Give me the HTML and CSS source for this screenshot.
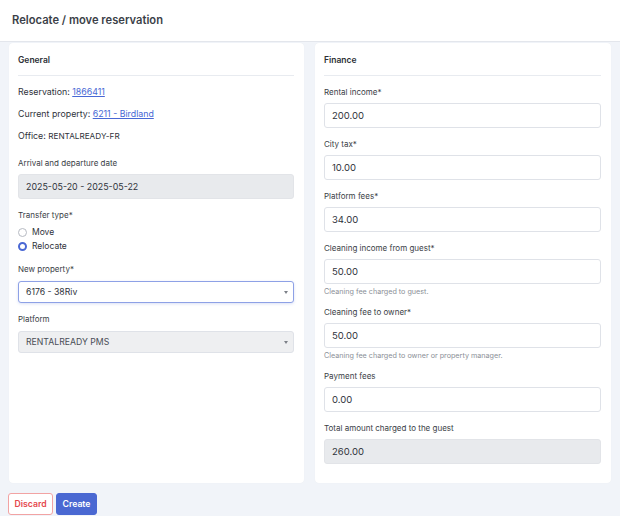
FILE: index.html
```html
<!DOCTYPE html>
<html>
<head>
<meta charset="utf-8">
<link rel="stylesheet" href="styles.css">
</head>
<body>
<header class="topbar"><h1 class="title">Relocate / move reservation</h1></header>
<main class="content">
  <div class="cards">
    <section class="card">
      <h2 class="card-title">General</h2>
      <div class="card-body">
        <p class="info">Reservation: <a href="#">1866411</a></p>
        <p class="info">Current property: <a href="#">6211 - Birdland</a></p>
        <p class="info">Office: <span class="plain">RENTALREADY-FR</span></p>
        <div class="group first-group">
          <label class="label">Arrival and departure date</label>
          <div class="input disabled date">2025-05-20 - 2025-05-22</div>
        </div>
        <div class="group">
          <label class="label">Transfer type*</label>
          <div class="radios">
            <div class="radio-row"><span class="radio"></span><span>Move</span></div>
            <div class="radio-row"><span class="radio checked"></span><span>Relocate</span></div>
          </div>
        </div>
        <div class="group">
          <label class="label">New property*</label>
          <div class="select focused">6176 - 38Riv<span class="caret"></span></div>
        </div>
        <div class="group">
          <label class="label">Platform</label>
          <div class="select disabled">RENTALREADY PMS<span class="caret"></span></div>
        </div>
      </div>
    </section>
    <section class="card">
      <h2 class="card-title">Finance</h2>
      <div class="card-body">
        <div class="group">
          <label class="label">Rental income*</label>
          <div class="input">200.00</div>
        </div>
        <div class="group">
          <label class="label">City tax*</label>
          <div class="input">10.00</div>
        </div>
        <div class="group">
          <label class="label">Platform fees*</label>
          <div class="input">34.00</div>
        </div>
        <div class="group">
          <label class="label">Cleaning income from guest*</label>
          <div class="input">50.00</div>
          <p class="help">Cleaning fee charged to guest.</p>
        </div>
        <div class="group">
          <label class="label">Cleaning fee to owner*</label>
          <div class="input">50.00</div>
          <p class="help">Cleaning fee charged to owner or property manager.</p>
        </div>
        <div class="group">
          <label class="label">Payment fees</label>
          <div class="input">0.00</div>
        </div>
        <div class="group">
          <label class="label">Total amount charged to the guest</label>
          <div class="input disabled">260.00</div>
        </div>
      </div>
    </section>
  </div>
  <div class="actions">
    <button class="btn btn-discard">Discard</button>
    <button class="btn btn-create">Create</button>
  </div>
</main>
</body>
</html>
```
FILE: styles.css
```css
* { box-sizing: border-box; }
html, body { margin: 0; padding: 0; }
body {
  font-family: Inter, "Noto Sans", sans-serif;
  background: #f1f4f9;
  color: #2f333b;
  width: 620px;
  height: 516px;
  overflow: hidden;
}
.topbar {
  background: #fff;
  height: 42px;
  border-bottom: 1px solid #e3e6ec;
  display: flex;
  align-items: center;
  padding-left: 12px;
}
.title {
  margin: 0;
  font-size: 11.2px;
  font-weight: 600;
  color: #3b3f48;
  position: relative;
  top: -1px;
}
.content { padding: 1px 9px 0 9px; }
.cards {
  display: grid;
  grid-template-columns: 295px 296px;
  column-gap: 11px;
}
.card {
  background: #fff;
  border-radius: 4px;
  height: 440px;
  padding: 0 10px 0 9px;
  box-shadow: 0 0 1px rgba(0,0,0,0.06);
}
.card-title {
  margin: 0;
  font-size: 8.5px;
  font-weight: 600;
  color: #2c2f36;
  height: 33px;
  padding-top: 12px;
  line-height: 10px;
  border-bottom: 1px solid #e8ebf0;
}
.card-body { padding-top: 10px; }
.info {
  margin: 0;
  height: 22px;
  line-height: 12px;
  font-size: 8.8px;
  color: #2f333b;
}
.info a { color: #4868d5; text-decoration: underline; }
.info .plain { font-size: 8.2px; }
.first-group { margin-top: 5px; }
.group { margin-bottom: 10px; }
.label {
  display: block;
  font-size: 8px;
  line-height: 12px;
  color: #3a3e46;
  margin-bottom: 5px;
}
.input {
  height: 25px;
  border: 1px solid #dfe2e8;
  border-radius: 3px;
  padding: 0 7px;
  font-size: 9.5px;
  line-height: 23px;
  color: #2f333b;
  background: #fff;
}
.input.date { font-size: 8.9px; }
.input.disabled { background: #e8eaed; border-color: #e2e4e8; }
.help {
  margin: 3px 0 10px 0;
  font-size: 7.2px;
  line-height: 9px;
  color: #8b8f97;
}
.group:has(.help) { margin-bottom: 0; }
.radios { margin-top: -1px; }
.radio-row {
  display: flex;
  align-items: center;
  gap: 5px;
  height: 14px;
  font-size: 8.5px;
  color: #2f333b;
}
.radio {
  width: 9px;
  height: 9px;
  border: 1px solid #b6bac2;
  border-radius: 50%;
  background: #fff;
}
.radio.checked { border: 2.5px solid #4a68d4; }
.select {
  position: relative;
  height: 22px;
  border: 1px solid #dfe2e8;
  border-radius: 3px;
  padding: 0 7px;
  font-size: 8.7px;
  line-height: 20px;
  color: #2f333b;
  background: #fff;
}
.select.focused {
  border-color: #8ea1e6;
  box-shadow: 0 1px 3px rgba(74,104,212,0.2);
}
.select.disabled { background: #eeeff1; color: #4a4e56; }
.group:has(.select) .label { margin-bottom: 6px; }
.caret {
  position: absolute;
  right: 5px;
  top: 9px;
  width: 0;
  height: 0;
  border-left: 2.5px solid transparent;
  border-right: 2.5px solid transparent;
  border-top: 3px solid #7c8088;
}
.actions {
  display: flex;
  gap: 3px;
  margin-top: 10px;
  margin-left: -1px;
}
.btn {
  font-family: Inter, "Noto Sans", sans-serif;
  font-size: 8.7px;
  font-weight: 600;
  height: 22px;
  border-radius: 3px;
  padding: 0;
  cursor: pointer;
}
.btn-discard {
  width: 45px;
  background: #fff;
  border: 1px solid #f2a3a3;
  color: #e5484d;
}
.btn-create {
  width: 41px;
  background: #4a68d2;
  border: 1px solid #4a68d2;
  color: #fff;
}
```
